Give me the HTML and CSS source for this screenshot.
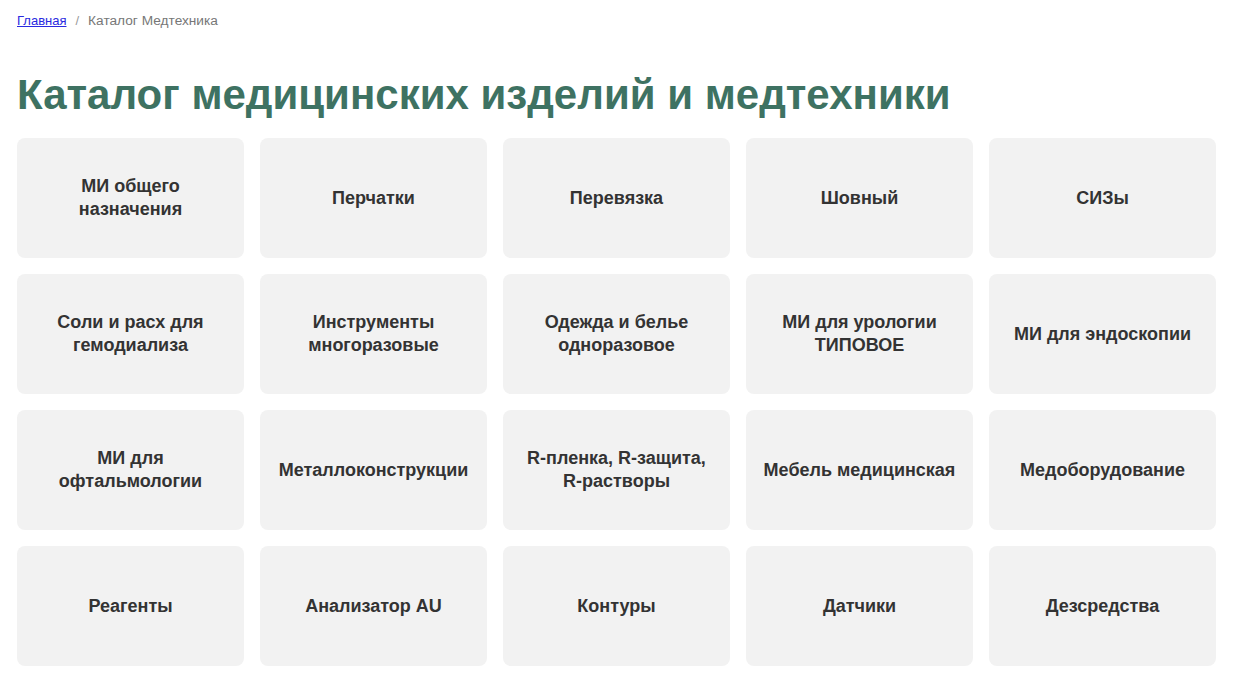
FILE: index.html
```html
<!DOCTYPE html>
<html lang="ru">
<head>
<meta charset="utf-8">
<title>Каталог медицинских изделий и медтехники</title>
<link rel="stylesheet" href="styles.css">
</head>
<body>
<div class="page">
  <nav class="crumbs">
    <a href="#" class="crumb-link">Главная</a>
    <span class="crumb-sep">/</span>
    <span class="crumb-current">Каталог Медтехника</span>
  </nav>
  <h1 class="title">Каталог медицинских изделий и медтехники</h1>
  <div class="grid">
    <a class="card" href="#">МИ общего назначения</a>
    <a class="card" href="#">Перчатки</a>
    <a class="card" href="#">Перевязка</a>
    <a class="card" href="#">Шовный</a>
    <a class="card" href="#">СИЗы</a>
    <a class="card" href="#">Соли и расх для гемодиализа</a>
    <a class="card" href="#">Инструменты многоразовые</a>
    <a class="card" href="#">Одежда и белье одноразовое</a>
    <a class="card" href="#">МИ для урологии ТИПОВОЕ</a>
    <a class="card" href="#">МИ для эндоскопии</a>
    <a class="card" href="#">МИ для офтальмологии</a>
    <a class="card" href="#">Металлоконструкции</a>
    <a class="card" href="#">R-пленка, R-защита, R-растворы</a>
    <a class="card" href="#">Мебель медицинская</a>
    <a class="card" href="#">Медоборудование</a>
    <a class="card" href="#">Реагенты</a>
    <a class="card" href="#">Анализатор AU</a>
    <a class="card" href="#">Контуры</a>
    <a class="card" href="#">Датчики</a>
    <a class="card" href="#">Дезсредства</a>
  </div>
</div>
</body>
</html>
```

FILE: styles.css
```css
* { box-sizing: border-box; }
html, body { margin: 0; padding: 0; background: #fff; }
body { font-family: "Liberation Sans", Arial, sans-serif; color: #333; }
.page { width: 1199px; margin-left: 17px; padding-top: 12px; }
.crumbs { font-size: 13px; line-height: 17px; color: #777; display: flex; align-items: baseline; gap: 9px; }
.crumb-link { text-decoration: underline; color: #2a2ae0; }
.crumb-sep { color: #999; }
.crumb-current { font-size: 13.7px; }
.title { margin: 41px 0 0 0; font-size: 42px; line-height: 50px; font-weight: bold; color: #3e7262; }
.grid { margin-top: 18px; display: grid; grid-template-columns: repeat(5, 227px); gap: 16px; }
.card { height: 120px; background: #f2f2f2; border-radius: 8px; display: flex; align-items: center; justify-content: center; text-align: center; padding: 0 16px; font-size: 18px; line-height: 23px; font-weight: bold; color: #333; text-decoration: none; }
```
